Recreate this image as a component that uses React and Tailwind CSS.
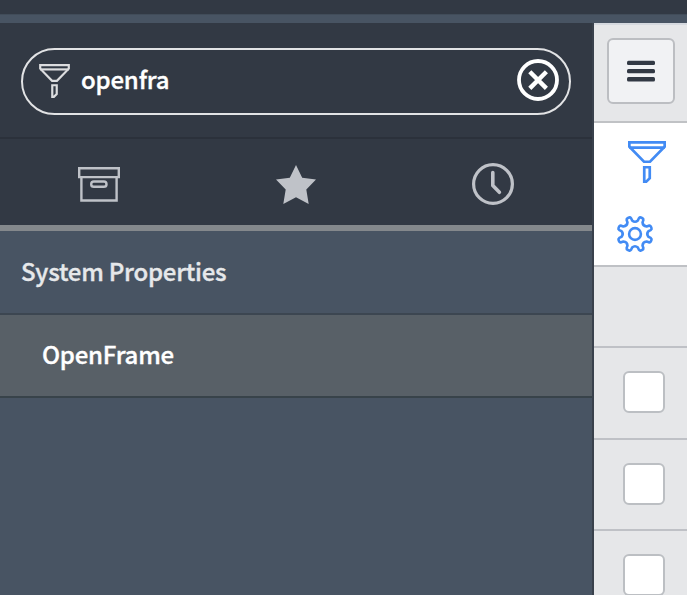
import { useState } from "react";

const GEAR_PATH = buildGear(20, 20, 8);

function buildGear(cx, cy, teeth) {
  const at = (deg, r) => {
    const rad = (deg * Math.PI) / 180;
    return `${(cx + r * Math.cos(rad)).toFixed(2)} ${(cy + r * Math.sin(rad)).toFixed(2)}`;
  };
  const step = 360 / teeth;
  let d = "";
  for (let i = 0; i < teeth; i++) {
    const a = i * step + step / 2;
    d += `${i === 0 ? "M" : "L"}${at(a - 10.5, 13.8)} L${at(a - 8.5, 16.2)} `;
    d += `Q${at(a - 6.5, 17.6)} ${at(a - 3, 17.5)} L${at(a + 3, 17.5)} `;
    d += `Q${at(a + 6.5, 17.6)} ${at(a + 8.5, 16.2)} L${at(a + 10.5, 13.8)} `;
    d += `Q${at(a + step / 2, 11)} ${at(a + step - 10.5, 13.8)} `;
  }
  return d + "Z";
}

function FunnelIcon({ className }) {
  return (
    <svg viewBox="0 0 38 42" className={className} fill="none" stroke="currentColor" strokeWidth="2.7">
      <path d="M1.35 1.35h35.3v4.4L22 20.75h-6L1.35 5.75z" />
      <path d="M1.25 6.7h35.5" />
      <path d="M16.25 26.25h5.5v11l-3.5 3.4h-2z" />
    </svg>
  );
}

function ArchiveIcon() {
  return (
    <svg viewBox="0 0 42 35" className="h-[35px] w-[42px]" fill="none" stroke="currentColor" strokeWidth="2.4">
      <path d="M1.2 1.2h39.6v8.9H1.2z" />
      <path d="M3.4 10.1v23.4h35.2V10.1" />
      <rect x="13.2" y="14.5" width="15.3" height="5.3" rx="2.65" />
    </svg>
  );
}

function StarIcon() {
  return (
    <svg viewBox="0 0 40 39" className="h-[39px] w-10" fill="currentColor">
      <path d="M20 0l6.2 12.7L40 14.6l-9.7 10L32.7 39 20 32.3 7.3 39l2.4-14.4-9.7-10 13.8-1.9z" />
    </svg>
  );
}

function ClockIcon() {
  return (
    <svg viewBox="0 0 42 42" className="size-[42px]" fill="none" stroke="currentColor" strokeLinecap="round" strokeLinejoin="round">
      <circle cx="21" cy="21" r="19.4" strokeWidth="3.2" />
      <path d="M20.8 9.5v13l6.6 6.8" strokeWidth="3.6" />
    </svg>
  );
}

function ClearIcon() {
  return (
    <svg viewBox="0 0 42 42" className="size-[42px]" fill="none" stroke="currentColor">
      <circle cx="21" cy="21" r="19" strokeWidth="3.8" />
      <path d="M12.8 12.8l16.6 16.6M29.4 12.8L12.8 29.4" strokeWidth="4.4" />
    </svg>
  );
}

function GearIcon() {
  return (
    <svg viewBox="0 0 40 40" className="size-10" fill="none" stroke="currentColor" strokeWidth="2.6" strokeLinejoin="round">
      <path d={GEAR_PATH} />
      <circle cx="20" cy="20" r="5.9" strokeWidth="2.6" />
    </svg>
  );
}

function MenuIcon() {
  return (
    <svg viewBox="0 0 28 22" className="h-[22px] w-7" fill="#323944">
      <rect y="0.7" width="28" height="4.3" rx="1.5" />
      <rect y="9" width="28" height="4.3" rx="1.5" />
      <rect y="17.1" width="28" height="4.3" rx="1.5" />
    </svg>
  );
}

function CheckRow({ className }) {
  return (
    <div className={`flex shrink-0 items-start border-b-2 border-[#bfc1c6] pt-[23px] pl-[29px] ${className}`}>
      <div className="size-[42px] shrink-0 rounded-md border-2 border-[#bcbfc3] bg-white" />
    </div>
  );
}

export default function App() {
  const [query, setQuery] = useState("openfra");

  return (
    <div className="flex h-[595px] w-[687px] flex-col overflow-hidden bg-[#485463] font-['Noto_Sans_CJK_SC',sans-serif] tracking-[-0.23px] [-webkit-text-stroke:0.35px_currentColor]">
      {/* Top bar */}
      <div className="h-3.5 shrink-0 bg-[#323944]" />
      <div className="h-[9px] shrink-0 border-t border-[#414c59] bg-[#485463]" />

      <div className="flex min-h-0 flex-1">
        {/* Navigator */}
        <div className="flex w-[594px] shrink-0 flex-col border-r-2 border-[#39414c]">
          <div className="h-[116px] shrink-0 border-b-2 border-[#2b313b] bg-[#323944] pt-[25px] pr-[21px] pl-[21px]">
            <div className="flex h-[67px] items-center rounded-full border-2 border-[#e2e3e5] pr-2.5 pb-[3px] pl-4">
              <FunnelIcon className="mt-0.5 h-[34px] w-[31px] text-[#dcdddf]" />
              <input
                value={query}
                onChange={(e) => setQuery(e.target.value)}
                className="mb-0.5 ml-[11px] min-w-0 flex-1 bg-transparent text-[24px] leading-9 font-medium tracking-[-0.2px] text-white outline-none"
              />
              <button onClick={() => setQuery("")} className="text-white">
                <ClearIcon />
              </button>
            </div>
          </div>

          <div className="grid h-[92px] shrink-0 grid-cols-3 items-center justify-items-center border-b-[6px] border-[#84888c] bg-[#323944] pt-1 text-[#bfc2c8]">
            <ArchiveIcon />
            <StarIcon />
            <ClockIcon />
          </div>

          <div className="flex h-[84px] shrink-0 items-center border-b-2 border-[#3c4651] pb-[3px] pl-[21px] text-[24px] font-medium text-[#e6e8ea]">
            System Properties
          </div>
          <div className="flex h-[83px] shrink-0 items-center border-b-2 border-[#38434a] bg-[#586067] pb-[3px] pl-[42px] text-[24px] font-medium text-white">
            OpenFrame
          </div>
        </div>

        {/* List column */}
        <div className="flex min-w-0 flex-1 flex-col bg-[#e6e7e9]">
          <div className="h-[100px] shrink-0 border-t-2 border-b-2 border-t-[#d5d9df] border-b-[#c0c2c5] pt-[13px] pl-[13px]">
            <button className="flex h-[66px] w-[68px] items-center justify-center rounded-md border-2 border-[#bcbec2] bg-[#f1f2f4]">
              <MenuIcon />
            </button>
          </div>

          <div className="h-36 shrink-0 border-b-2 border-[#bfc1c5] bg-white pt-[18px] text-[#428bf4]">
            <FunnelIcon className="ml-[34px] h-[42px] w-[38px]" />
            <div className="mt-[31px] ml-[21px]">
              <GearIcon />
            </div>
          </div>

          <div className="h-[81px] shrink-0 border-b-2 border-[#bfc1c6]" />
          <CheckRow className="h-[92px]" />
          <CheckRow className="h-[91px]" />
          <CheckRow className="h-[92px]" />
        </div>
      </div>
    </div>
  );
}
